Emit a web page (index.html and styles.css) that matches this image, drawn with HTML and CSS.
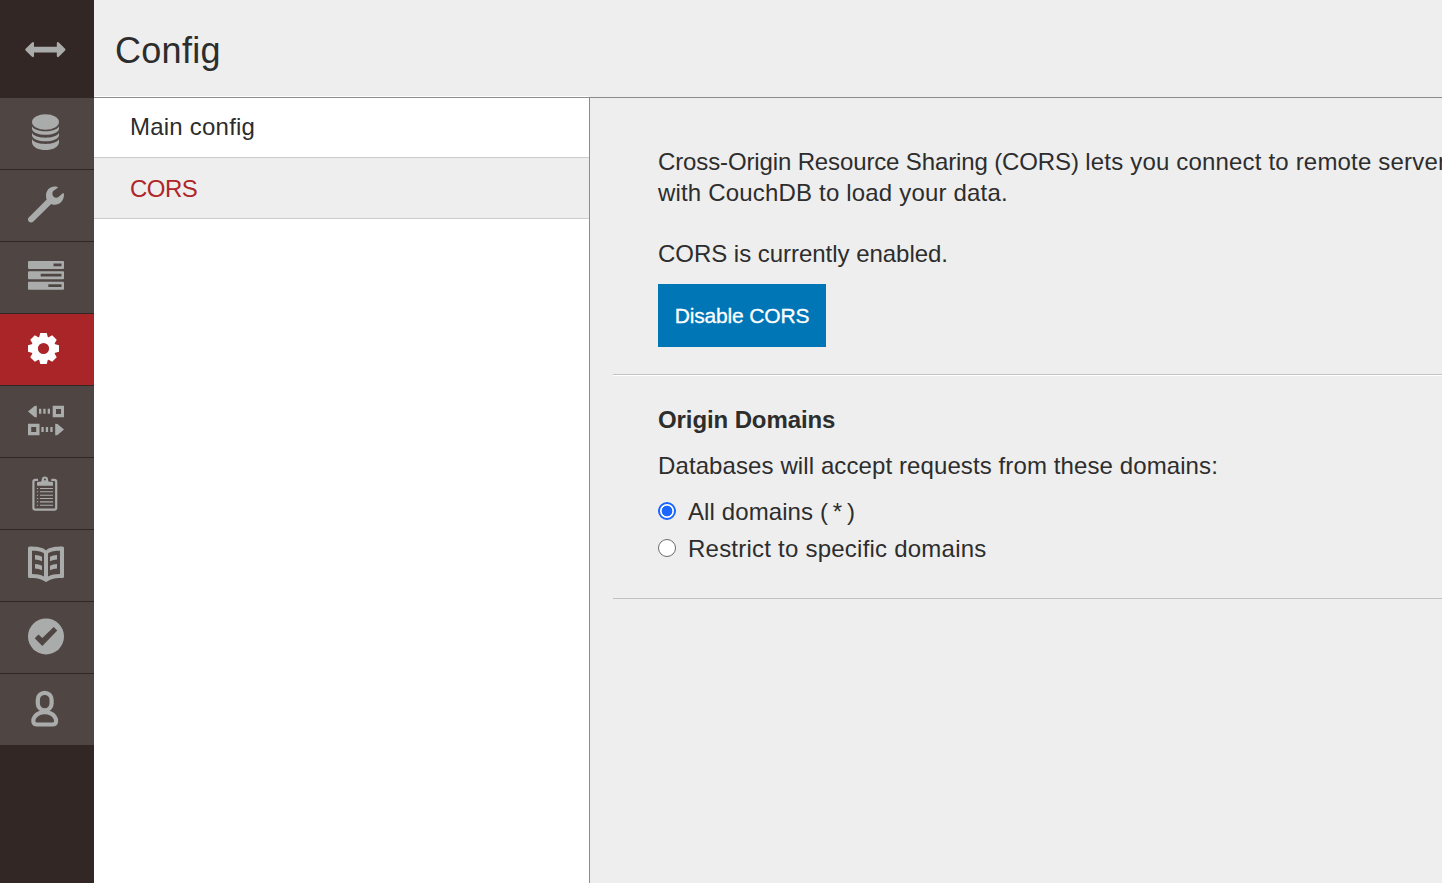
FILE: index.html
```html
<!DOCTYPE html>
<html lang="en">
<head>
<meta charset="utf-8">
<title>Config</title>
<link rel="stylesheet" href="styles.css">
</head>
<body>
<div class="app">
  <nav class="sidebar">
    <a class="burger">
      <svg width="94" height="98" viewBox="0 0 94 98"><path d="M25.6 48.7 32 42.4q1.9-1 2 1v3.3h22.8v-3.3q.1-2 2-1l6.300 6.300q.8.9 0 1.800L58.800 56.800q-1.900 1-2-1v-3.200H34v3.200q-.1 2-2 1l-6.400-6.300q-.8-.9 0-1.800z"/></svg>
    </a>
    <a class="nav-item">
      <svg viewBox="0 0 94 71"><ellipse cx="45.500" cy="24" rx="13.500" ry="7.700"/><path d="M32 28.300c3 6.600 24 6.600 27 0v2.700c-1 7.700-26 7.700-27 0zM32 34.700c3 6.600 24 6.600 27 0v2.700c-1 7.700-26 7.700-27 0zM32 41.100c3 6.600 24 6.600 27 0v3.400c-1 10-26 10-27 0z"/></svg>
    </a>
    <a class="nav-item">
      <svg viewBox="0 0 94 71"><path d="M57 16.800C51 15.300 46 19.700 46 25.500c0 1.600.2 2.800.7 4L29 47.200c-1.400 1.400-1.300 3.200-.2 4.400 1.200 1.200 3.300 1.200 4.600-.1L51.200 33.900c5.800 2.800 12.800-1.600 12.800-9.400 0-1.500-.7-1.700-1.600-.9l-3.900 3.500c-3 1.600-6.300-.3-6.100-3.700.1-1.100.4-1.800 1.200-2.600l3.800-2.700c.8-.5.5-1.100-.4-1.300z"/></svg>
    </a>
    <a class="nav-item">
      <svg viewBox="0 0 94 71"><path fill-rule="evenodd" d="M29 19h34q1 0 1 1v6q0 1-1 1H29q-1 0-1-1v-6q0-1 1-1zM53.500 21.500v2.700h8v-2.700zM29 29.300h34q1 0 1 1v6q0 1-1 1H29q-1 0-1-1v-6q0-1 1-1zM40.700 31.800v2.700h20.800v-2.700zM29 39.700h34q1 0 1 1v6q0 1-1 1H29q-1 0-1-1v-6q0-1 1-1zM48.300 42.200v2.700h13.200v-2.700z"/></svg>
    </a>
    <a class="nav-item active">
      <svg viewBox="0 0 94 71"><defs><path id="tooth" d="M-4.700-10-3.200-15.500H3.200L4.700-10z"/></defs><g transform="translate(43.500 34.500)"><circle r="8.800" fill="none" stroke="#fff" stroke-width="6.400"/><use href="#tooth"/><use href="#tooth" transform="rotate(45)"/><use href="#tooth" transform="rotate(90)"/><use href="#tooth" transform="rotate(135)"/><use href="#tooth" transform="rotate(180)"/><use href="#tooth" transform="rotate(225)"/><use href="#tooth" transform="rotate(270)"/><use href="#tooth" transform="rotate(315)"/></g></svg>
    </a>
    <a class="nav-item">
      <svg viewBox="0 0 94 71"><path fill-rule="evenodd" d="M28 25.500 34.500 20q1-.3 2.300-.3v11.600q-1.300 0-2.300-.3zM39 22.700h2.300v5H39zM43.300 22.700h2.300v5h-2.300zM47.700 22.700H50v5h-2.300zM52.700 19.700H64v11.600H52.700zM56 23v5h5v-5zM28 37.700h11.500v11.600H28zM31.200 41v5h5v-5zM41.400 41h2.300v5h-2.300zM45.800 41h2.300v5h-2.300zM50.300 41h2.300v5h-2.300zM64 43.500 57.500 38q-1-.3-2.300-.3v11.600q1.300 0 2.300-.3z"/></svg>
    </a>
    <a class="nav-item">
      <svg viewBox="0 0 94 71"><rect class="line" x="33.400" y="21.800" width="22.800" height="29.900" rx="2" stroke-width="2.200"/><path class="gap" d="M38 20h13.300v3.500H38z"/><path fill-rule="evenodd" d="M37 27.700v-3q0-1 1-1h2.800q1-.2 1-2.200a3.100 3.100 0 0 1 6.200 0q0 2 1 2.200h3q1 0 1 1v3zM44.900 20.500a1 1 0 1 0 0 2a1 1 0 0 0 0-2z"/><path class="line" stroke-width="1.100" d="M40 30.500h13M40 33.700h13M40 37.300h13M40 40.500h13M40 43.900h13M40 47.300h13M36.900 30.500h1.200M36.900 33.700h1.200M36.900 37.300h1.200M36.900 40.500h1.200M36.900 43.900h1.200M36.900 47.300h1.200"/></svg>
    </a>
    <a class="nav-item">
      <svg viewBox="0 0 94 71"><path fill-rule="evenodd" d="M29.500 16.500C36 16.500 42.500 17 46 20.400 49.500 17 56 16.500 62.500 16.500q1.500 0 1.500 1.500v28.500q0 1.500-1.500 1.500c-6 0-11 .5-14.300 2.800q-2.200 2.300-4.400 0C40.500 48.500 35.500 48 29.500 48q-1.500 0-1.500-1.500V18q0-1.500 1.500-1.500zM32 20.800v23.200c4.500.1 8.500.6 12 2.400V23.300c-3-1.900-7-2.500-12-2.500zM60 20.800c-5 0-9 .6-12 2.500v23.100c3.500-1.800 7.500-2.300 12-2.400z"/><path d="M35 25q4 0 7 1.700v4.600q-3-1.700-7-1.700zM35 34q4 0 7 1.700v4.600q-3-1.700-7-1.700zM57 25q-4 0-7 1.700v4.600q3-1.700 7-1.700zM57 34q-4 0-7 1.700v4.600q3-1.700 7-1.700z"/></svg>
    </a>
    <a class="nav-item">
      <svg viewBox="0 0 94 71"><circle cx="46" cy="34.400" r="18"/><path class="gap" d="M34.700 36.300 38.500 32.500 42.300 36.100 53.700 25 57.300 28.600 42.300 43.900z"/></svg>
    </a>
    <a class="nav-item">
      <svg viewBox="0 0 94 71"><rect class="line" x="37.800" y="18.800" width="13.800" height="17.600" rx="6.900" stroke-width="4.200"/><path class="line gap-fill" stroke-width="4.200" d="M37 50.500h15.500c4.200 0 4.500-4.500 2.200-7.700-4.500-6.200-15.500-6.200-20 0-2.300 3.200-2 7.700 2.300 7.700z"/></svg>
    </a>
  </nav>
  <div class="page">
    <header class="header"><h1>Config</h1></header>
    <div class="columns">
      <ul class="tabs">
        <li class="tab">Main config</li>
        <li class="tab selected">CORS</li>
      </ul>
      <main class="content">
        <section class="intro">
          <p class="lead"><span class="tight">Cross-Origin Resource Sharing (CORS) </span>lets you connect to remote server<br>with CouchDB to load your data.</p>
          <p class="status">CORS is currently enabled.</p>
          <button class="btn">Disable CORS</button>
        </section>
        <section class="domains">
          <h2>Origin Domains</h2>
          <p class="hint">Databases will accept requests from these domains:</p>
          <label class="option"><span class="radio checked"></span><span>All domains <span class="wildcard">( * )</span></span></label>
          <label class="option"><span class="radio"></span><span class="restrict">Restrict to specific domains</span></label>
        </section>
      </main>
    </div>
  </div>
</div>
</body>
</html>
```
FILE: styles.css
```css
* { box-sizing: border-box; }
body {
  margin: 0;
  overflow: hidden;
  background: #eee;
  color: #2d2d2d;
  font: 24px/31px "Liberation Sans", Arial, sans-serif;
  letter-spacing: 0.1px;
}
h1, h2, p, ul { margin: 0; padding: 0; }
.app { display: flex; width: 100vw; height: 100vh; overflow: hidden; }
.sidebar { flex: 0 0 94px; background: #332725; }
.burger { display: block; height: 98px; }
.nav-item { display: block; height: 72px; background: #4f4644; border-bottom: 1px solid #332725; }
.nav-item:last-child { height: 71px; border-bottom: 0; }
.nav-item.active { background: #a92527; }
svg { display: block; fill: #aaacab; }
.nav-item svg { width: 94px; height: 71px; }
.active svg { fill: #fff; }
.line { fill: none; stroke: #aaacab; }
.gap, .line.gap-fill { fill: #4f4644; }
.page { flex: 1; min-width: 0; display: flex; flex-direction: column; }
.header {
  flex: 0 0 98px;
  padding: 31px 0 0 21px;
  border-bottom: 1px solid #8b8b8b;
  background: linear-gradient(#fff, #fff) 0 100% / 495px 1px no-repeat;
}
h1 { font-size: 36px; line-height: 40px; font-weight: 400; letter-spacing: 0.3px; }
.columns { flex: 1; display: flex; min-height: 0; }
.tabs { flex: 0 0 496px; list-style: none; background: #fff; border-right: 1px solid #8b8b8b; }
.tab { height: 60px; padding: 13px 36px 0; border-bottom: 1px solid #ccc; letter-spacing: 0.22px; }
.tab.selected { height: 61px; padding-top: 15px; background: #eee; color: #af2528; letter-spacing: -0.5px; }
.content { flex: 1; min-width: 0; padding-left: 23px; white-space: nowrap; overflow: hidden; }
.intro { height: 277px; padding: 48px 0 0 45px; border-bottom: 1px solid #c2c2c2; }
.lead { letter-spacing: 0.18px; }
.tight { letter-spacing: -0.13px; }
.status { margin-top: 30px; letter-spacing: -0.03px; }
.btn {
  display: block; width: 168px; height: 63px; margin-top: 15px; padding: 0;
  border: 0; background: #0076b6; color: #fff;
  font: 21px/30px "Liberation Sans", Arial, sans-serif; letter-spacing: -0.15px;
  -webkit-text-stroke: 0.3px #fff;
}
.domains { height: 224px; padding: 28px 0 0 45px; border-top: 1px solid #fff; border-bottom: 1px solid #c2c2c2; }
h2 { font-size: 24px; line-height: 31px; letter-spacing: -0.1px; }
.hint { margin-top: 15px; }
.option { display: flex; height: 37px; align-items: center; gap: 12px; }
.hint + .option { margin-top: 12px; }
.restrict { letter-spacing: 0.23px; }
.wildcard { letter-spacing: -0.9px; }
.radio { width: 18px; height: 18px; margin-bottom: 2px; border: 1px solid #6b6b6b; border-radius: 50%; background: #fff; }
.radio.checked { border: 2px solid #1a66ff; background: radial-gradient(circle, #1a66ff 0 5px, #fff 5.7px); }
```
